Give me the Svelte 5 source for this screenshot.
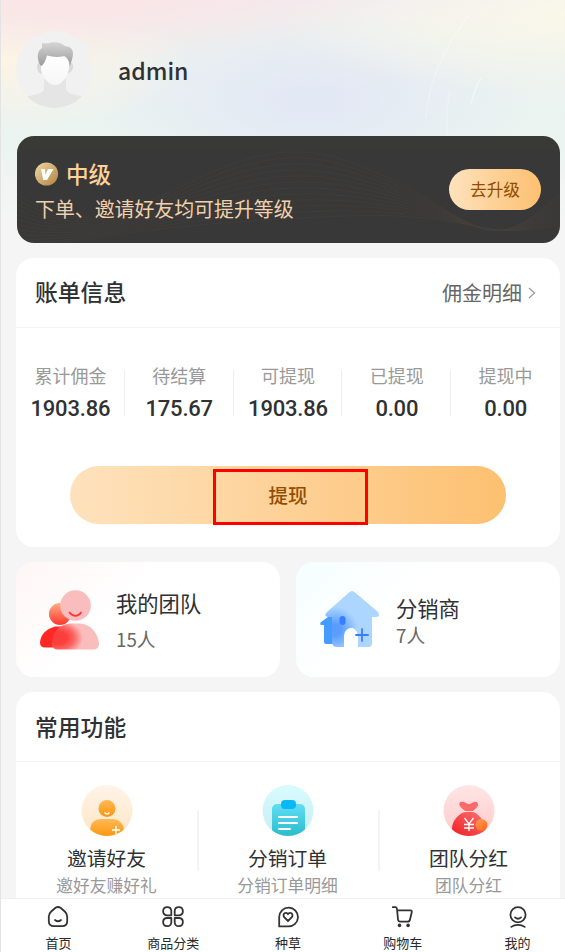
<script lang="ts">
	type Stat = {
		label: string;
		value: string;
	};

	const stats: Stat[] = [
		{ label: '累计佣金', value: '1903.86' },
		{ label: '待结算', value: '175.67' },
		{ label: '可提现', value: '1903.86' },
		{ label: '已提现', value: '0.00' },
		{ label: '提现中', value: '0.00' }
	];

	const features = [
		{ icon: 'invite', title: '邀请好友', desc: '邀好友赚好礼' },
		{ icon: 'order', title: '分销订单', desc: '分销订单明细' },
		{ icon: 'bonus', title: '团队分红', desc: '团队分红' }
	];

	const tabs = [
		{ icon: 'home', label: '首页' },
		{ icon: 'category', label: '商品分类' },
		{ icon: 'post', label: '种草' },
		{ icon: 'cart', label: '购物车' },
		{ icon: 'mine', label: '我的' }
	];

	const waves = Array.from({ length: 12 }, (_, i) => i);
</script>

<div class="screen">
	<header class="user">
		<svg class="streaks" viewBox="0 0 564 250" fill="none" stroke="#fff" stroke-width="1.5">
			<path d="M468 15Q429 65 425 118" opacity=".25" />
			<path d="M449 90Q442 125 450 165" opacity=".25" />
			<path d="M480 78Q473 90 470 104" opacity=".4" />
		</svg>
		<svg class="avatar" viewBox="0 0 77 77">
			<defs>
				<linearGradient id="hair" x2="0" y2="1">
					<stop stop-color="#d6d6d6" />
					<stop offset="1" stop-color="#9b9b9b" />
				</linearGradient>
				<linearGradient id="face" x2="0" y2="1">
					<stop stop-color="#fff" />
					<stop offset="1" stop-color="#f6f6f6" />
				</linearGradient>
				<clipPath id="round"><circle cx="38.5" cy="38.5" r="38.5" /></clipPath>
			</defs>
			<g clip-path="url(#round)">
				<path d="M0 0h77v77H0z" fill="#f1f1f1" />
				<path
					d="M28 48H50V55Q49 61 56 63Q62 64 70 67V77H7V67Q15 64 22 63Q29 61 28 55Z"
					fill="#e5e5e5"
				/>
				<path d="M22 32Q20 35 22 40Q24 44 27 42L51 42Q55 43 57 37Q58 33 55 32Z" fill="#dadada" />
				<path
					d="M25 34C26 31 29 25 31 24C39 27 49 23 53 29V38C51 46 46 54 39 54C32 54 27 46 25 39Z"
					fill="url(#face)"
				/>
				<path
					d="M25 35C21 30 20 20 26 17L26 12Q31 13 35 11.5Q44 10 49 15Q57 16 57 22C57 27 55 31 54 35C53 30 51 26 48 25Q40 27 31 24.5Q29 33 25 35Z"
					fill="url(#hair)"
				/>
			</g>
		</svg>
		<span class="name">admin</span>
	</header>

	<section class="level">
		<svg class="waves" viewBox="0 0 543 107" fill="none" stroke="#85613c" stroke-width=".6">
			{#each waves as i}
				<path
					d="M-10 {50 + i * 6}C110 {150 - i * 5} 190 {-25 + i * 10} 330 {25 + i * 5}S460 {145 -
						i * 3} 560 {40 + i * 4}"
				/>
			{/each}
		</svg>
		<div class="level-info">
			<div class="level-name">
				<svg width="24" height="24" viewBox="0 0 24 24">
					<defs>
						<linearGradient id="medal" x2="1" y2="1">
							<stop offset=".1" stop-color="#ead19c" />
							<stop offset="1" stop-color="#ae8240" />
						</linearGradient>
					</defs>
					<circle cx="11.5" cy="12" r="11.6" fill="url(#medal)" />
					<path d="M6 7H10L10.3 13L13 7H18.5L12 18H8.2Z" fill="#fff" />
				</svg>
				<span>中级</span>
			</div>
			<p>下单、邀请好友均可提升等级</p>
		</div>
		<button class="upgrade">去升级</button>
	</section>

	<section class="card bill">
		<div class="card-head">
			<h2>账单信息</h2>
			<a href="#detail">
				佣金明细
				<svg width="8" height="12" viewBox="0 0 8 12">
					<path d="M1 1L6.5 6L1 11" fill="none" stroke="#999" stroke-width="1.2" />
				</svg>
			</a>
		</div>
		<div class="stats">
			{#each stats as stat}
				<div class="stat">
					<span>{stat.label}</span>
					<strong>{stat.value}</strong>
				</div>
			{/each}
		</div>
		<button class="withdraw"><span>提现</span><i class="marker"></i></button>
	</section>

	<div class="groups">
		<section class="group team">
			<svg width="60" height="62" viewBox="0 0 60 62">
				<defs>
					<linearGradient id="team-head" x2="0" y2="1">
						<stop stop-color="#ffae82" />
						<stop offset="1" stop-color="#ff3630" />
					</linearGradient>
					<radialGradient
						id="team-body"
						gradientUnits="userSpaceOnUse"
						cx="0"
						cy="0"
						r="1"
						gradientTransform="matrix(25 0 0 18 18 49)"
					>
						<stop offset=".35" stop-color="#fc3f3d" />
						<stop offset=".65" stop-color="#fb6664" />
						<stop offset="1" stop-color="#fbbcbc" />
					</radialGradient>
				</defs>
				<circle cx="20" cy="25" r="11" fill="url(#team-head)" />
				<path d="M15 37.5H34V58.5H5Q0 58.5 0 53.5Q1 41.5 15 37.5Z" fill="#ff2924" />
				<circle cx="35.5" cy="16.5" r="15.3" fill="#fabdbd" />
				<path
					d="M29.5 23.5C33 28 38 28 41 23.5"
					fill="none"
					stroke="#fc373b"
					stroke-width="1.8"
					stroke-linecap="round"
				/>
				<path
					d="M12 54.5C12 42 21 34.5 32 34.5H39C50 34.5 58 44 59 54.5Q59 60.5 53 60.5H18Q12 60.5 12 54.5Z"
					fill="url(#team-body)"
				/>
			</svg>
			<div>
				<h3>我的团队</h3>
				<p>15人</p>
			</div>
		</section>
		<section class="group seller">
			<svg width="60" height="62" viewBox="0 0 60 62">
				<defs>
					<radialGradient id="house" gradientUnits="userSpaceOnUse" cx="15" cy="41" r="23">
						<stop offset=".25" stop-color="#5a9cff" />
						<stop offset="1" stop-color="#acd5ff" />
					</radialGradient>
				</defs>
				<path d="M11 27H18V55H6Q4 55 4 53V36H2Q-1 36 1 33L8 28Q9 27 11 27Z" fill="#459cff" />
				<path
					d="M29 3.5Q32 .5 35 3.5L58 23Q61 28 56 28H52V54Q52 58 48 58H38V49C38 35 24 37 24 48V58H17Q12 58 12 53V28H8Q3 27 7 23Z"
					fill="url(#house)"
				/>
				<rect x="19.5" y="27" width="6" height="9" rx="3" fill="#377fff" />
				<path
					d="M42 40V52M36 46H48"
					stroke="#377fff"
					stroke-width="1.8"
					stroke-linecap="round"
				/>
			</svg>
			<div>
				<h3>分销商</h3>
				<p>7人</p>
			</div>
		</section>
	</div>

	<section class="card common">
		<div class="card-head">
			<h2>常用功能</h2>
		</div>
		<div class="features">
			{#each features as feature}
				<div class="feature">
					<svg width="52" height="52" viewBox="0 0 52 52">
						<defs>
							<clipPath id="feature-round"><circle cx="26" cy="25.5" r="25.5" /></clipPath>
							<linearGradient id="invite-bg" x2="0" y2="1">
								<stop stop-color="#fff4e8" />
								<stop offset="1" stop-color="#ffe5c5" />
							</linearGradient>
							<linearGradient id="invite-fg" x2="0" y2="1">
								<stop stop-color="#ffb957" />
								<stop offset="1" stop-color="#fa950d" />
							</linearGradient>
							<linearGradient id="order-bg" x2="0" y2="1">
								<stop stop-color="#d8fbff" />
								<stop offset="1" stop-color="#c6edef" />
							</linearGradient>
							<linearGradient id="order-fg" x2="0" y2="1">
								<stop stop-color="#60def7" />
								<stop offset="1" stop-color="#25b9c8" />
							</linearGradient>
							<linearGradient id="bonus-bg" x2="0" y2="1">
								<stop stop-color="#ffe5e5" />
								<stop offset="1" stop-color="#ffcaca" />
							</linearGradient>
							<linearGradient id="bonus-fg" x1="1" x2="0" y2="1">
								<stop stop-color="#fb7777" />
								<stop offset="1" stop-color="#ee1b1f" />
							</linearGradient>
							<linearGradient id="coin" x2=".7" y2="1">
								<stop stop-color="#ffa252" />
								<stop offset="1" stop-color="#ff691d" />
							</linearGradient>
						</defs>
						<g clip-path="url(#feature-round)">
							<path d="M0 0h52v52H0z" fill="url(#{feature.icon}-bg)" />
							{#if feature.icon === 'invite'}
								<circle cx="26" cy="23.5" r="8.5" fill="url(#invite-fg)" />
								<path d="M9 52V45Q10 34 20 34H32Q42 35 43 45V52Z" fill="url(#invite-fg)" />
								<path
									d="M23.5 27.5Q26 30.5 28.5 27.5M35 41V49M31 45H39"
									fill="none"
									stroke="#fff"
									stroke-width="1.4"
								/>
							{:else if feature.icon === 'order'}
								<rect x="10" y="19" width="33" height="35" rx="5" fill="url(#order-fg)" />
								<rect x="19" y="15" width="15" height="9" rx="4" fill="#08b9f4" />
								<path
									d="M17 32H35M17 38H35M17 44H28"
									stroke="#fff"
									stroke-width="2"
									stroke-linecap="round"
								/>
							{:else}
								<path
									d="M22 26Q14 20 17 17Q20 16 23 18Q26 20 29 18Q34 15 35 19Q36 21 30 26Z"
									fill="#fb6a6a"
								/>
								<path
									d="M9 52V44C9 35 16 30 19 28Q21 27 24 27H30Q33 27 38 33Q43 39 43 52Z"
									fill="url(#bonus-fg)"
								/>
								<path
									d="M21.5 33L26 39L30.5 33M21 39.5H31M21 43H31M26 39V46"
									fill="none"
									stroke="#fff"
									stroke-width="1.3"
								/>
								<circle cx="38.5" cy="40" r="6" fill="url(#coin)" />
							{/if}
						</g>
					</svg>
					<h3>{feature.title}</h3>
					<p>{feature.desc}</p>
				</div>
			{/each}
		</div>
	</section>

	<nav class="tabbar">
		{#each tabs as tab}
			<a href="#{tab.icon}">
				<svg width="24" height="24" viewBox="0 0 24 24">
					{#if tab.icon === 'home'}
						<path
							d="M9.5 2.8Q12 1.2 14.5 2.8L18.8 6.5Q21.2 8.7 21.2 11.5V16Q21.2 21.2 16 21.2H8Q2.8 21.2 2.8 16V11.5Q2.8 8.7 5.2 6.5Z"
						/>
						<path d="M9 15Q12 17.6 15 15" />
					{:else if tab.icon === 'category'}
						<path d="M10.3 5.8V10.3H5.8A4.1 4.1 0 1 1 10.3 5.8Z" />
						<path d="M13.7 5.8V10.3H18.2A4.1 4.1 0 1 0 13.7 5.8Z" />
						<path d="M10.3 17.5V13H5.8A4.1 4.1 0 1 0 10.3 17.5Z" />
						<path d="M13.7 17.5V13H18.2A4.1 4.1 0 1 1 13.7 17.5Z" />
					{:else if tab.icon === 'post'}
						<path d="M3.2 21.4V12A9.4 9.4 0 1 1 12.2 21.4Z" />
						<path
							d="M12 16L8.2 12.2Q6.5 9.5 9 8Q11 7.3 12 9.2Q13 7.3 15 8Q17.5 9.5 15.8 12.2Z"
						/>
					{:else if tab.icon === 'cart'}
						<path d="M1.8 2.2H4.5Q5.8 2.3 6 4L7 14.5Q7.2 16.7 9.5 16.7H16.5Q18.6 16.7 19 14.5L20.8 7Q21 5.3 19.2 5.3H6.2" />
						<circle class="wheel" cx="8.5" cy="20.4" r="1.8" />
						<circle class="wheel" cx="17.1" cy="20.4" r="1.8" />
					{:else}
						<circle cx="12" cy="9.7" r="7.6" />
						<path d="M9 12.4Q12 15 15 12.4M5.3 21.9Q8 19.9 12 19.9Q16 19.9 18.7 21.9" />
					{/if}
				</svg>
				<span>{tab.label}</span>
			</a>
		{/each}
	</nav>
</div>

<style>
	:global(body) {
		overflow: hidden;
		background: #f5f5f5;
	}

	.screen {
		position: relative;
		box-sizing: border-box;
		width: 575px;
		height: 952px;
		padding: 0 15px;
		border-left: 1px solid #e3e3e3;
		overflow: hidden;
		font-family: 'Noto Sans CJK SC', sans-serif;
		color: #303133;
		background:
			linear-gradient(transparent 150px, #f5f5f5 245px),
			radial-gradient(ellipse 300px 60px at 80px 0, #fae6e7 20%, transparent),
			radial-gradient(ellipse 300px 80px at 565px 15px, #faf8ea, transparent),
			radial-gradient(ellipse 190px 70px at 0 60px, #fdf4e4, transparent),
			radial-gradient(ellipse 220px 90px at 310px 100px, #e3e8f5 10%, transparent),
			linear-gradient(#f0eaf1, #ecf1ef 35px, #ebf4f1 150px, #f5f5f5 245px);
	}

	h2,
	h3,
	p {
		margin: 0;
		font-weight: 400;
	}

	button {
		padding: 0;
		border: 0;
		font-family: inherit;
		color: #944d00;
		background: linear-gradient(90deg, #fee2bd, #fdc071);
	}

	a {
		text-decoration: none;
		color: inherit;
	}

	.user {
		display: flex;
		align-items: center;
		gap: 25px;
		height: 77px;
		padding: 31px 0 28px;
	}

	.streaks {
		position: absolute;
		top: 0;
		left: 0;
		width: 564px;
		height: 250px;
	}

	.avatar {
		width: 77px;
		height: 77px;
	}

	.name {
		position: relative;
		font-size: 23px;
		font-weight: 500;
		line-height: 36px;
	}

	.level {
		position: relative;
		box-sizing: border-box;
		display: flex;
		align-items: center;
		justify-content: space-between;
		width: 543px;
		height: 107px;
		margin-left: 1px;
		padding: 0 19px 0 18px;
		border-radius: 17px;
		overflow: hidden;
		background: #393938;
	}

	.waves {
		position: absolute;
		inset: 0;
		opacity: 0.16;
	}

	.level-info {
		position: relative;
		padding-top: 2px;
		color: #f0d1ad;
	}

	.level-name {
		display: flex;
		align-items: center;
		gap: 7px;
		font-size: 22.6px;
		font-weight: 500;
		line-height: 34px;
		color: #ffd199;
	}

	.level-info p {
		margin-top: 1px;
		font-size: 19.9px;
		line-height: 33px;
	}

	.upgrade {
		position: relative;
		width: 92px;
		height: 41px;
		border-radius: 21px;
		font-size: 16.7px;
		line-height: 41px;
	}

	.card {
		margin-top: 15px;
		width: 544px;
		border-radius: 18px;
		background: #fff;
	}

	.bill {
		height: 289px;
	}

	.card-head {
		box-sizing: border-box;
		display: flex;
		align-items: center;
		justify-content: space-between;
		height: 70px;
		padding: 0 24px 0 19px;
		border-bottom: 1px solid #f3f3f3;
	}

	.card-head h2 {
		padding-bottom: 1px;
		font-size: 22.8px;
		font-weight: 500;
		line-height: 34px;
	}

	.card-head a {
		display: flex;
		align-items: center;
		gap: 6px;
		font-size: 20px;
		color: #666;
	}

	.stats {
		display: grid;
		grid-template-columns: repeat(5, 1fr);
		padding-top: 42px;
	}

	.stat {
		height: 46px;
		padding-left: 1px;
		display: flex;
		flex-direction: column;
		align-items: center;
		white-space: nowrap;
		border-right: 1px solid #eee;
	}

	.stat:last-child {
		border-right-color: transparent;
	}

	.stat span {
		margin-top: -8px;
		font-size: 18px;
		line-height: 26px;
		color: #999;
	}

	.stat strong {
		margin-top: 7px;
		font-family: Roboto, sans-serif;
		font-size: 22px;
		font-weight: 500;
		line-height: 28px;
		letter-spacing: -0.2px;
	}

	.withdraw {
		position: relative;
		display: block;
		width: 436px;
		height: 58px;
		margin: 50px auto 0;
		border-radius: 29px;
		font-size: 19.5px;
		font-weight: 500;
	}

	.withdraw span {
		display: block;
		padding-bottom: 2px;
	}

	.marker {
		position: absolute;
		top: 3px;
		left: 143px;
		width: 149px;
		height: 50px;
		border: 3px solid #f00;
	}

	.groups {
		display: grid;
		grid-template-columns: 264px 264px;
		gap: 16px;
		margin-top: 15px;
	}

	.group {
		box-sizing: border-box;
		display: flex;
		align-items: center;
		gap: 16px;
		height: 115px;
		padding-left: 24px;
		border-radius: 18px;
	}

	.team {
		background: linear-gradient(135deg, #fff6f5, #fff 38%);
	}

	.seller {
		background: linear-gradient(135deg, #f5feff, #fff 38%);
	}

	.group h3 {
		font-size: 21.3px;
		line-height: 32px;
	}

	.group p {
		font-size: 18.8px;
		line-height: 28px;
		color: #666;
	}

	.team p {
		margin-top: 6px;
	}

	.seller h3 {
		padding-top: 3px;
		line-height: 27px;
	}

	.seller p {
		line-height: 28px;
	}

	.common {
		height: 260px;
	}

	.common h2 {
		padding-bottom: 0;
	}

	.features {
		display: grid;
		grid-template-columns: 181px 181px 181px;
		padding-top: 23px;
	}

	.feature {
		position: relative;
		display: flex;
		flex-direction: column;
		align-items: center;
	}

	.feature:not(:last-child)::after {
		content: '';
		position: absolute;
		top: 25px;
		right: -2px;
		width: 2px;
		height: 61px;
		background: #f4f4f4;
	}

	.feature h3 {
		margin-top: 6px;
		font-size: 19.8px;
		line-height: 29px;
	}

	.feature p {
		margin-top: 1px;
		font-size: 16.8px;
		line-height: 25px;
		color: #999;
	}

	.tabbar {
		position: absolute;
		left: 0;
		right: 0;
		bottom: 0;
		box-sizing: border-box;
		display: grid;
		grid-template-columns: repeat(5, 1fr);
		height: 54px;
		padding-top: 6px;
		border-top: 1px solid #f0f0f0;
		background: #fff;
	}

	.tabbar a {
		display: flex;
		flex-direction: column;
		align-items: center;
		font-size: 13px;
		line-height: 19px;
		color: #282828;
	}

	.tabbar svg {
		margin-bottom: 4px;
		fill: none;
		stroke: #333;
		stroke-width: 1.8;
		stroke-linecap: round;
		stroke-linejoin: round;
	}

	.tabbar .wheel {
		fill: #333;
		stroke: none;
	}
</style>
